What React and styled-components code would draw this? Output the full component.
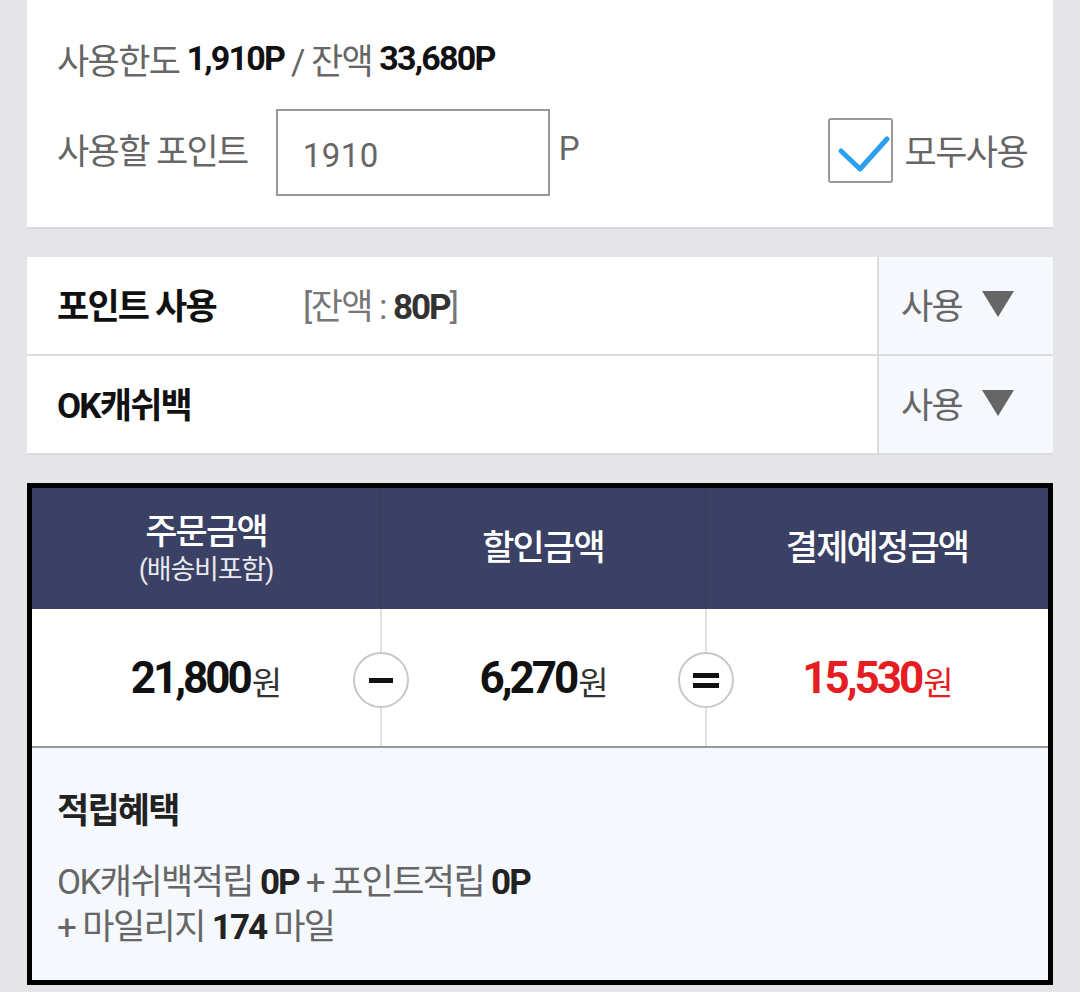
import styled, { createGlobalStyle } from "styled-components";

const GlobalStyle = createGlobalStyle`
  html, body {
    margin: 0;
    padding: 0;
    background: #e5e5e9;
  }
  body {
    font-family: "Roboto", "Noto Sans CJK KR", sans-serif;
    color: #666;
  }
  * { box-sizing: border-box; }
`;

const Page = styled.div`
  padding: 0 27px 9px;
  display: flex;
  flex-direction: column;
  gap: 28px;
`;

const Card = styled.section`
  background: #fff;
  border-bottom: 2px solid #d8d8dc;
`;

const LimitCard = styled(Card)`
  padding: 38px 26px 31px 30px;
  display: flex;
  flex-direction: column;
  gap: 31px;
`;

const LimitLine = styled.div`
  height: 40px;
  display: flex;
  align-items: center;
  font-size: 35px;
  letter-spacing: -1.6px;
  color: #666;
  white-space: pre;

  b {
    font-weight: 700;
    color: #111;
    font-size: 34px;
    letter-spacing: -1.8px;
  }
`;

const InputRow = styled.div`
  display: flex;
  align-items: center;
  height: 87px;
`;

const Label = styled.span`
  font-size: 35px;
  letter-spacing: -1.6px;
  color: #666;
  margin-top: -8px;
`;

const PointInput = styled.div`
  margin-left: 28px;
  width: 274px;
  height: 87px;
  border: 2px solid #999;
  display: flex;
  align-items: center;
  padding: 6px 0 0 25px;
  font-size: 33px;
  color: #666;
  letter-spacing: 0.5px;
`;

const Unit = styled.span`
  margin-left: 9px;
  margin-top: -8px;
  font-size: 33px;
  color: #666;
`;

const CheckWrap = styled.label`
  margin-left: auto;
  display: flex;
  align-items: center;
  gap: 12px;
  font-size: 35px;
  letter-spacing: -1.6px;
  color: #666;

  span {
    margin-top: -6px;
  }
`;

const CheckBox = styled.div`
  width: 65px;
  height: 65px;
  border: 2px solid #999;
  border-radius: 3px;
  background: #fff;
  display: flex;
  align-items: center;
  justify-content: center;
  margin-top: -4px;
`;

const PointCard = styled(Card)`
  display: flex;
  flex-direction: column;
  border-bottom: none;
`;

const PointRow = styled.div`
  display: flex;
  height: 99px;
  border-bottom: 2px solid #dcdcdf;
`;

const PointMain = styled.div`
  flex: 1;
  display: flex;
  align-items: center;
  padding: 0 0 4px 30px;
`;

const PointTitle = styled.span`
  width: 246px;
  font-size: 35px;
  font-weight: 700;
  color: #111;
  letter-spacing: -1.8px;
`;

const Balance = styled.span`
  font-size: 35px;
  color: #777;
  letter-spacing: -1.6px;

  b {
    font-weight: 700;
    color: #333;
    letter-spacing: -2px;
  }
`;

const UseSelect = styled.div`
  width: 176px;
  border-left: 2px solid #dcdcdf;
  background: #f5f8fc;
  display: flex;
  align-items: center;
  padding: 0 0 4px 22px;
  gap: 20px;
  font-size: 35px;
  color: #666;
  letter-spacing: -1.6px;
`;

const Summary = styled.section`
  border: 5px solid #000;
  background: #f5f8fc;
`;

const SummaryHead = styled.div`
  display: grid;
  grid-template-columns: 348px 325px 1fr;
  height: 121px;
  background: #3a4164;
`;

const HeadCell = styled.div`
  display: flex;
  flex-direction: column;
  align-items: center;
  justify-content: center;
  color: #fff;
  font-size: 35px;
  font-weight: 500;
  letter-spacing: -1.8px;
  line-height: 42px;
  border-left: ${(p) => (p.first ? "none" : "1px solid #333a5a")};

  small {
    font-size: 27px;
    font-weight: 400;
    line-height: 32px;
    letter-spacing: -1.2px;
    color: #e8e9ef;
  }
`;

const SummaryValues = styled.div`
  display: grid;
  grid-template-columns: 348px 325px 1fr;
  height: 139px;
  background: #fff;
  border-bottom: 2px solid #999;
`;

const ValueCell = styled.div`
  position: relative;
  display: flex;
  align-items: center;
  justify-content: center;
  border-left: ${(p) => (p.first ? "none" : "2px solid #e0e0e3")};
  color: ${(p) => (p.red ? "#e41e22" : "#111")};

  strong {
    font-size: 44px;
    font-weight: 700;
    letter-spacing: -3px;
  }

  span {
    font-size: 33px;
    font-weight: 400;
    letter-spacing: -1px;
    color: ${(p) => (p.red ? "#e41e22" : "#333")};
    margin-top: 6px;
    margin-left: 2px;
  }
`;

const Operator = styled.div`
  position: absolute;
  left: -29px;
  top: 43px;
  width: 56px;
  height: 56px;
  border-radius: 50%;
  border: 2px solid #c8c8cc;
  background: #fff;
  display: flex;
  flex-direction: column;
  align-items: center;
  justify-content: center;
  gap: 5px;
`;

const Bar = styled.i`
  display: block;
  width: ${(p) => (p.wide ? "26px" : "24px")};
  height: 5px;
  background: #111;
`;

const Benefit = styled.div`
  padding: 44px 30px 30px 25px;
`;

const BenefitTitle = styled.h3`
  margin: 0 0 28px;
  height: 40px;
  line-height: 40px;
  font-size: 35px;
  font-weight: 700;
  color: #222;
  letter-spacing: -1.8px;
`;

const BenefitLine = styled.p`
  margin: 0;
  line-height: 45px;
  font-size: 35px;
  color: #666;
  letter-spacing: -1.6px;

  b {
    font-weight: 700;
    color: #222;
    letter-spacing: -2px;
  }
`;

const CheckIcon = () => (
  <svg width="61" height="61" viewBox="0 0 61 61">
    <polyline
      points="11,31 30,49 57,19"
      fill="none"
      stroke="#2aa0ef"
      strokeWidth="5"
      strokeLinecap="round"
      strokeLinejoin="round"
    />
  </svg>
);

const Caret = () => (
  <svg width="32" height="26" viewBox="0 0 32 26">
    <polygon points="0,0 32,0 16,26" fill="#666" />
  </svg>
);

const pointRows = [
  { title: "포인트 사용", balance: "80P" },
  { title: "OK캐쉬백" },
];

const totals = [
  { amount: "21,800" },
  { amount: "6,270", op: "minus" },
  { amount: "15,530", op: "equal", red: true },
];

export default function App() {
  return (
    <>
      <GlobalStyle />
      <Page>
        <LimitCard>
          <LimitLine>
            사용한도 <b>1,910P</b> / 잔액 <b>33,680P</b>
          </LimitLine>
          <InputRow>
            <Label>사용할 포인트</Label>
            <PointInput>1910</PointInput>
            <Unit>P</Unit>
            <CheckWrap>
              <CheckBox>
                <CheckIcon />
              </CheckBox>
              <span>모두사용</span>
            </CheckWrap>
          </InputRow>
        </LimitCard>

        <PointCard>
          {pointRows.map((row) => (
            <PointRow key={row.title}>
              <PointMain>
                <PointTitle>{row.title}</PointTitle>
                {row.balance && (
                  <Balance>
                    [잔액 : <b>{row.balance}</b>]
                  </Balance>
                )}
              </PointMain>
              <UseSelect>
                사용
                <Caret />
              </UseSelect>
            </PointRow>
          ))}
        </PointCard>

        <Summary>
          <SummaryHead>
            <HeadCell first>
              주문금액
              <small>(배송비포함)</small>
            </HeadCell>
            <HeadCell>할인금액</HeadCell>
            <HeadCell>결제예정금액</HeadCell>
          </SummaryHead>
          <SummaryValues>
            {totals.map((t, i) => (
              <ValueCell key={t.amount} first={i === 0} red={t.red}>
                {t.op && (
                  <Operator>
                    <Bar wide={t.op === "equal"} />
                    {t.op === "equal" && <Bar wide />}
                  </Operator>
                )}
                <strong>{t.amount}</strong>
                <span>원</span>
              </ValueCell>
            ))}
          </SummaryValues>
          <Benefit>
            <BenefitTitle>적립혜택</BenefitTitle>
            <BenefitLine>
              OK캐쉬백적립 <b>0P</b> + 포인트적립 <b>0P</b>
            </BenefitLine>
            <BenefitLine>
              + 마일리지 <b>174</b> 마일
            </BenefitLine>
          </Benefit>
        </Summary>
      </Page>
    </>
  );
}
